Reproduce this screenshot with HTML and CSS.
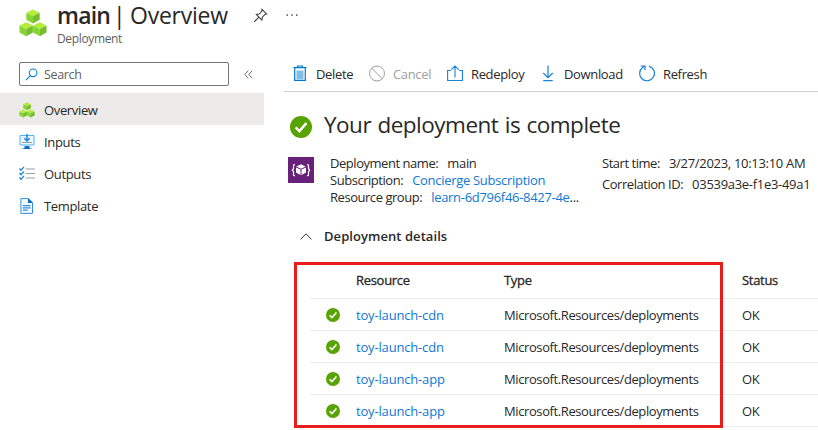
FILE: index.html
```html
<!DOCTYPE html>
<html lang="en">
<head>
<meta charset="utf-8">
<title>main | Overview</title>
<link rel="stylesheet" href="styles.css">
</head>
<body>
<svg class="defs" aria-hidden="true">
  <symbol id="cubes" viewBox="0 0 28 28">
    <g id="cube">
      <path fill="#b4ec36" d="M14 .5l6.700 3.300L14 7.200 7.300 3.800z"/>
      <path fill="#86d633" d="M7.300 3.800L14 7.200v7.300l-6.700-3.700z"/>
      <path fill="#76bc2d" d="M20.700 3.800L14 7.200v7.300l6.700-3.700z"/>
    </g>
    <use href="#cube" x="-6.800" y="12.700"/>
    <use href="#cube" x="6.800" y="12.700"/>
  </symbol>
  <symbol id="ok" viewBox="0 0 22 22">
    <circle cx="11" cy="11" r="11" fill="#57a300"/>
    <path d="M5.600 11.300l3.800 3.800 7-7.900" fill="none" stroke="#fff" stroke-width="2.500"/>
  </symbol>
</svg>
<header class="header">
  <svg class="logo"><use href="#cubes"/></svg>
  <div class="heading">
    <h1 class="title"><b class="title-name">main</b><span class="title-bar">|</span><span class="title-page">Overview</span></h1>
    <div class="subtitle">Deployment</div>
  </div>
  <svg class="pin" viewBox="0 0 16 16" fill="none" stroke="#3b3a39" stroke-width="1.100"><path d="M9.600 1.500l4.900 4.900-1.700.4-2.900 3-.4 3.100-6-6 3.100-.5 2.800-2.900zM6.300 9.700L1.300 14.700"/></svg>
  <svg class="more" viewBox="0 0 12 4" fill="#3b3a39"><circle cx="1.200" cy="2" r=".85"/><circle cx="6" cy="2" r=".85"/><circle cx="10.800" cy="2" r=".85"/></svg>
</header>
<div class="body">
  <nav class="sidebar">
    <div class="search-row">
      <div class="search">
        <svg viewBox="0 0 14 14" fill="none" stroke="#0078d4" stroke-width="1.100"><circle cx="8.700" cy="5.200" r="4.100"/><path d="M5.700 8.300L1 13"/></svg>
        <span>Search</span>
      </div>
      <svg class="collapse" viewBox="0 0 9 9" fill="none" stroke="#605e5c" stroke-width=".9"><path d="M4.200.7L.8 4.500l3.400 3.800M8.200.7L4.800 4.500l3.400 3.800"/></svg>
    </div>
    <a class="nav selected"><svg viewBox="0 0 16 16"><use href="#cubes"/></svg><span>Overview</span></a>
    <a class="nav"><svg viewBox="0 0 16 16"><path fill="#0f6cbd" d="M5.500 12h5v2.300h1.700V15H3.800v-.7h1.700z"/><path fill="#eaf7fe" stroke="#50b5ee" d="M1 1.500h14V11H1z"/><path fill="none" stroke="#9b9b9b" d="M3 8.500h10"/><path fill="none" stroke="#1683d8" stroke-width="1.400" d="M8 0v6.500M5.300 4.200L8 6.900l2.700-2.700"/></svg><span>Inputs</span></a>
    <a class="nav"><svg viewBox="0 0 16 16" fill="none"><path stroke="#a0a0a0" stroke-width="1.200" d="M6.500 3H16M6.500 7.500H16M6.500 12H16"/><path stroke="#1683d8" stroke-width="1.300" d="M.4 2.500L2 4.200 5 .9M.4 7L2 8.700 5 5.400M.4 11.500L2 13.200 5 9.900"/></svg><span>Outputs</span></a>
    <a class="nav"><svg viewBox="0 0 16 16"><path fill="#f3faff" stroke="#3390df" d="M1.900.6h7.600l4 4v10.800H1.900z"/><path fill="#0f6cbd" d="M9 .2L13.900 5H9z"/><path stroke="#3390df" stroke-width="1.200" d="M3.800 7.600h7.700M3.800 9.900h7.700M3.800 12.200h5"/></svg><span>Template</span></a>
  </nav>
  <main class="content">
    <div class="toolbar">
      <div class="command delete"><svg viewBox="0 0 16 18"><path fill="#83bde9" d="M4.500 5.500h7v8.700h-7z"/><path fill="none" stroke="#0078d4" stroke-width="1.200" d="M1.500 2.600h13M5.500 2.300V1h5v1.300M2.700 2.800v12.600h10.600V2.800"/></svg><span>Delete</span></div>
      <div class="command cancel"><svg viewBox="0 0 16 18" fill="none" stroke="#a19f9d"><circle cx="8" cy="8.500" r="7.500"/><path d="M2.700 3.200l10.600 10.600"/></svg><span>Cancel</span></div>
      <div class="command redeploy"><svg viewBox="0 0 16 18" fill="none" stroke="#1683d8" stroke-width="1.100"><path d="M3.800 5.500H.6v10h14.800v-10h-3.200M8 12.500V1M4.300 4.700L8 1l3.700 3.700"/></svg><span>Redeploy</span></div>
      <div class="command download"><svg viewBox="0 0 16 18" fill="none" stroke="#1683d8" stroke-width="1.200"><path d="M8 .5v12M3.300 8L8 12.700 12.700 8M3.300 15.600h9.400"/></svg><span>Download</span></div>
      <div class="command refresh"><svg viewBox="0 0 16 18" fill="none" stroke="#1683d8" stroke-width="1.200"><path d="M10 1.200a7.400 7.400 0 1 1-6.400 1.200L6 1M1.800 1H6v4.200"/></svg><span>Refresh</span></div>
    </div>
    <div class="complete">
      <svg><use href="#ok"/></svg>
      <h2>Your deployment is complete</h2>
    </div>
    <section class="summary">
      <svg class="template-icon" viewBox="0 0 26 26"><path fill="#68217a" d="M0 0h26v26H0z"/><path fill="#fff" d="M13 7.300l4.700 2.200L13 11.700 8.300 9.500zM8 10.500l4.500 2.100v5.300L8 15.500zM18 10.500l-4.500 2.100v5.300l4.500-2.400z"/><path fill="none" stroke="#fff" stroke-width="1.200" d="M7 7.700H6.300q-.8 0-.8 1v3l-1.200 1.500 1.200 1.500v3q0 1 .8 1H7M19 7.700h.7q.8 0 .8 1v3l1.200 1.500-1.200 1.500v3q0 1-.8 1H19"/></svg>
      <dl class="facts">
        <div><dt>Deployment name:</dt><dd>main</dd></div>
        <div><dt>Subscription:</dt><dd class="link">Concierge Subscription</dd></div>
        <div><dt>Resource group:</dt><dd><span class="link">learn-6d796f46-8427-4e</span>...</dd></div>
      </dl>
      <dl class="facts timing">
        <div><dt>Start time:</dt><dd>3/27/2023, 10:13:10 AM</dd></div>
        <div><dt>Correlation ID:</dt><dd>03539a3e-f1e3-49a1</dd></div>
      </dl>
    </section>
    <div class="details">
      <svg viewBox="0 0 12 7" fill="none" stroke="#323130"><path d="M.5 6.400L6 .8l5.500 5.600"/></svg>
      <h3>Deployment details</h3>
    </div>
    <div class="resources">
      <div class="row head"><span></span><span>Resource</span><span>Type</span><span>Status</span></div>
      <div class="row"><svg><use href="#ok"/></svg><a class="link name">toy-launch-cdn</a><span class="kind">Microsoft.Resources/deployments</span><span>OK</span></div>
      <div class="row"><svg><use href="#ok"/></svg><a class="link name">toy-launch-cdn</a><span class="kind">Microsoft.Resources/deployments</span><span>OK</span></div>
      <div class="row"><svg><use href="#ok"/></svg><a class="link name">toy-launch-app</a><span class="kind">Microsoft.Resources/deployments</span><span>OK</span></div>
      <div class="row"><svg><use href="#ok"/></svg><a class="link name">toy-launch-app</a><span class="kind">Microsoft.Resources/deployments</span><span>OK</span></div>
      <div class="highlight"></div>
    </div>
  </main>
</div>
</body>
</html>
```
FILE: styles.css
```css
* { box-sizing: border-box; }
html, body { margin: 0; height: 430px; overflow: hidden; }
body { background: #fff; color: #292827; font: 13px/18px "Open Sans", "Noto Sans", sans-serif; letter-spacing: -0.35px; white-space: nowrap; }
h1, h2, h3, dl, dd { margin: 0; font-weight: 400; }
svg { display: block; flex: none; }
.defs { position: absolute; width: 0; height: 0; }
.link { color: #0f78d4; }

.header { display: flex; height: 62px; padding-left: 19px; }
.logo { width: 28px; height: 28px; margin-top: 9px; }
.heading { width: 196px; margin-left: 10px; }
.title { display: flex; height: 30px; font-size: 23px; line-height: 30px; letter-spacing: -0.25px; }
.title-name { width: 56px; font-weight: 600; letter-spacing: -0.8px; }
.title-bar { width: 17px; }
.subtitle { font-size: 12px; line-height: 18px; color: #605e5c; }
.pin { width: 15px; height: 15px; margin-top: 8px; }
.more { width: 12px; height: 4px; margin: 13px 0 0 18px; }

.body { display: flex; }
.sidebar { width: 264px; }
.search-row { display: flex; align-items: center; height: 31px; padding: 0 0 7px 19px; }
.search { display: flex; align-items: center; width: 210px; height: 24px; padding: 1px 0 0 5px; border: 1px solid #767473; border-radius: 2px; font-size: 12.5px; color: #605e5c; }
.search svg { width: 13px; height: 13px; margin-right: 6px; }
.collapse { width: 9px; height: 9px; margin-left: 15px; }
.nav { display: flex; align-items: center; height: 32px; padding: 2px 0 0 19px; }
.nav svg { width: 16px; height: 16px; margin-right: 9px; }
.selected { background: #edebe9; }

.content { width: 534px; margin-left: 20px; }
.toolbar { display: flex; height: 30px; padding: 2px 0 0 8px; border-bottom: 1px solid #d2d0ce; }
.command { display: flex; height: 20px; }
.command svg { width: 16px; height: 18px; margin: 1px 8px 0 0; }
.command span { line-height: 20px; }
.delete { width: 77px; }
.cancel { width: 78px; color: #a19f9d; }
.redeploy { width: 93px; }
.download { width: 99px; }
.complete { display: flex; align-items: center; height: 64px; padding: 6px 0 0 6px; }
.complete svg { width: 22px; height: 22px; margin-right: 12px; }
.complete h2 { margin-top: -4px; font-size: 22.5px; line-height: 32px; letter-spacing: -0.5px; word-spacing: 1px; }

.summary { display: flex; height: 66px; padding-left: 4px; }
.template-icon { width: 26px; height: 26px; margin: 1px 16px 0 0; }
.facts { flex: none; width: 272px; letter-spacing: -0.3px; }
.facts div { display: flex; height: 17px; line-height: 14px; }
.facts dt { margin-right: 9px; letter-spacing: -0.46px; }
.facts.timing { width: 216px; }
.timing div { height: 21px; }

.details { display: flex; align-items: center; height: 28px; padding-left: 16px; }
.details svg { width: 12px; height: 7px; margin-right: 12px; }
.details h3 { font-size: 13px; font-weight: 600; letter-spacing: 0.06px; }

.resources { position: relative; margin: 13px 0 0 26px; }
.row { display: grid; grid-template-columns: 46px 148px 238px 1fr; align-items: center; height: 32px; border-bottom: 1px solid #edebe9; }
.row svg { width: 14px; height: 14px; margin-left: 16px; }
.name { letter-spacing: -0.17px; }
.kind { letter-spacing: -0.4px; }
.head { height: 36px; padding-bottom: 1px; letter-spacing: -0.3px; -webkit-text-stroke: 0.3px #292827; }
.highlight { position: absolute; left: -16px; top: -1px; width: 429px; height: 166px; border: 3px solid #e91c1c; }
```
